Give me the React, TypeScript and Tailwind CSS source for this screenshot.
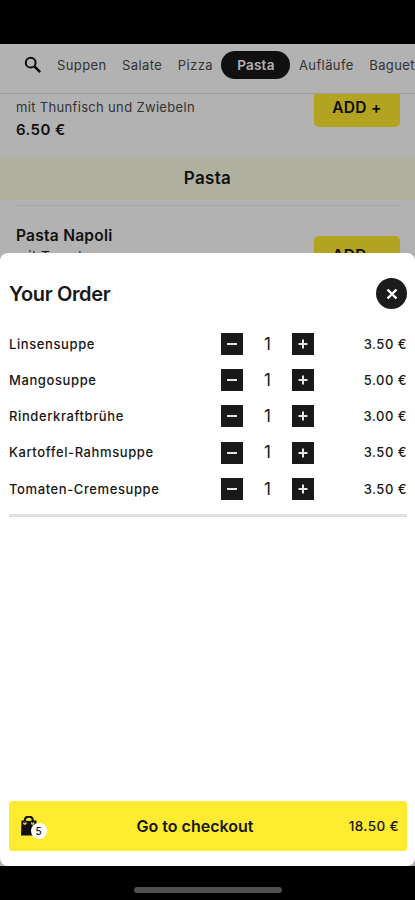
import React, { useState } from 'react';

type OrderItem = {
  name: string;
  price: number;
  amount: number;
};

const categories = ['Suppen', 'Salate', 'Pizza', 'Pasta', 'Aufläufe', 'Baguettes'];

const initialOrder: OrderItem[] = [
  { name: 'Linsensuppe', price: 3.5, amount: 1 },
  { name: 'Mangosuppe', price: 5, amount: 1 },
  { name: 'Rinderkraftbrühe', price: 3, amount: 1 },
  { name: 'Kartoffel-Rahmsuppe', price: 3.5, amount: 1 },
  { name: 'Tomaten-Cremesuppe', price: 3.5, amount: 1 },
];

const AddButton: React.FC = () => (
  <button className="h-[39px] w-[86px] shrink-0 rounded-[5px] bg-[#ffeb2f] pt-px text-[15.5px] font-semibold tracking-[0.3px] text-[#111]">
    ADD +
  </button>
);

const CategoryBar: React.FC = () => (
  <nav className="flex h-[50px] shrink-0 items-center overflow-hidden border-b border-[#e2e2e2] pb-[7px] pl-6 text-[13px] whitespace-nowrap text-[#4b4b4b]">
    <svg viewBox="0 0 18 18" className="mr-[15px] h-[18px] w-[18px] shrink-0" fill="none" stroke="#111">
      <circle cx="6.7" cy="6.7" r="4.9" strokeWidth="2" />
      <path d="M10.4 10.4 L16.2 16.2" strokeWidth="2.5" />
    </svg>
    <div className="flex items-center gap-[15.5px]">
      {categories.map((category) =>
        category === 'Pasta' ? (
          <span
            key={category}
            className="-mx-[7px] flex h-7 w-[69px] shrink-0 items-center justify-center rounded-full bg-[#181818] text-[13.5px] font-semibold tracking-[0.2px] text-white"
          >
            {category}
          </span>
        ) : (
          <span key={category} className="pt-px tracking-[0.4px]">
            {category}
          </span>
        )
      )}
    </div>
  </nav>
);

const Menu: React.FC = () => (
  <div className="flex h-full flex-col bg-white text-[#171717]">
    <CategoryBar />
    <div className="flex h-[62px] shrink-0 items-start justify-between overflow-hidden pr-[15px] pl-4">
      <div className="pt-[3px]">
        <p className="text-[13px] leading-5 tracking-[0.33px] text-[#4b4b4b]">mit Thunfisch und Zwiebeln</p>
        <p className="mt-[3px] text-[15px] leading-5 font-semibold tracking-[0.4px]">6.50 €</p>
      </div>
      <div className="-mt-[6px]">
        <AddButton />
      </div>
    </div>
    <h2 className="flex h-11 shrink-0 items-center justify-center bg-[#fcfde6] pt-px text-[17px] font-semibold tracking-[0.3px]">
      Pasta
    </h2>
    <div className="mt-[5px] mr-[15px] ml-4 flex items-start justify-between border-t border-[#eeeff0]">
      <div className="pt-[20px]">
        <p className="text-[15.5px] leading-5 font-semibold tracking-[0.25px]">Pasta Napoli</p>
        <p className="text-[13.5px] leading-5 tracking-[0.45px]">mit Tomatensauce</p>
      </div>
      <div className="pt-[30px]">
        <AddButton />
      </div>
    </div>
  </div>
);

const App: React.FC = () => {
  const [order, setOrder] = useState<OrderItem[]>(initialOrder);
  const [open, setOpen] = useState<boolean>(true);

  const changeAmount = (index: number, step: number) => {
    setOrder(
      order.map((item, i) =>
        i === index ? { ...item, amount: Math.max(0, item.amount + step) } : item
      )
    );
  };

  const total = order.reduce((sum, item) => sum + item.price * item.amount, 0);
  const count = order.reduce((sum, item) => sum + item.amount, 0);

  return (
    <div className="flex h-[900px] w-[415px] flex-col overflow-hidden bg-black pt-11 font-['Inter','Liberation_Sans',sans-serif]">
      <main className="relative h-[822px] shrink-0 overflow-hidden">
        <Menu />
        {open && (
          <div className="absolute inset-0 bg-black/30 pt-[209px]">
            <section className="flex h-[613px] flex-col rounded-[8px] bg-white pr-2 pb-[15px] pl-[9px] text-[#171717]">
              <div className="flex h-[81px] shrink-0 items-center justify-between">
                <h1 className="text-[20px] font-semibold tracking-[-0.35px]">Your Order</h1>
                <button
                  aria-label="Close"
                  onClick={() => setOpen(false)}
                  className="flex h-[31px] w-[31px] items-center justify-center rounded-full bg-[#1c1c1c]"
                >
                  <svg viewBox="0 0 12 12" className="h-3 w-3" stroke="#fff" strokeWidth="2.4">
                    <path d="M1.5 1.5 L10.5 10.5 M10.5 1.5 L1.5 10.5" />
                  </svg>
                </button>
              </div>
              <ul className="-mt-[8px] shrink-0 border-b-[3px] border-[#dfe1e2] pb-[7px]">
                {order.map((item, index) => (
                  <li key={item.name} className="flex h-[36.2px] items-center text-[13px]">
                    <span className="w-[212px] pt-px font-medium tracking-[0.6px] whitespace-nowrap">{item.name}</span>
                    <div className="flex w-[93px] items-center justify-between">
                      <button
                        aria-label="Remove one"
                        onClick={() => changeAmount(index, -1)}
                        className="flex h-[22px] w-[22px] items-center justify-center bg-[#191919]"
                      >
                        <span className="h-[2px] w-[10px] bg-[#e4e4e4]" />
                      </button>
                      <span className="pt-px text-[17px]">{item.amount}</span>
                      <button
                        aria-label="Add one"
                        onClick={() => changeAmount(index, 1)}
                        className="flex h-[22px] w-[22px] items-center justify-center bg-[#191919]"
                      >
                        <svg viewBox="0 0 10 10" className="h-[10px] w-[10px]" stroke="#e4e4e4" strokeWidth="2">
                          <path d="M5 0.5 V9.5 M0.5 5 H9.5" />
                        </svg>
                      </button>
                    </div>
                    <span className="ml-auto pt-px font-medium tracking-[0.5px]">{item.price.toFixed(2)} €</span>
                  </li>
                ))}
              </ul>
              <button className="mt-auto flex h-[50px] shrink-0 items-center rounded-[3px] bg-[#ffeb2f] pr-2 pl-3">
                <span className="relative h-5 w-[45px]">
                  <svg viewBox="0 0 16 20" className="h-5 w-4">
                    <path d="M0.5 4.5 H15.5 V19.5 H0 Z" fill="#111" />
                    <path d="M3.8 7 V4.2 A4 3.6 0 0 1 11.8 4.2 V7" fill="none" stroke="#111" strokeWidth="2.2" />
                    <path d="M5.5 4.8 A2.3 2.5 0 0 1 10.1 4.8 Z" fill="#ffeb2f" />
                    <circle cx="3.9" cy="7.2" r="1.6" fill="#ffeb2f" />
                    <circle cx="11.7" cy="7.2" r="1.6" fill="#ffeb2f" />
                    <path d="M3.9 4 V7.2 M11.7 4 V7.2" stroke="#111" strokeWidth="1.2" />
                  </svg>
                  <span className="absolute top-[7px] left-[9.5px] flex h-4 w-4 items-center justify-center rounded-full bg-white text-[10px] font-medium">
                    {count}
                  </span>
                </span>
                <span className="flex-1 text-center text-[16px] font-semibold">Go to checkout</span>
                <span className="w-[75px] text-right text-[13.5px] font-medium tracking-[0.4px]">{total.toFixed(2)} €</span>
              </button>
            </section>
          </div>
        )}
      </main>
      <footer className="flex h-[34px] shrink-0 justify-center pt-[21px]">
        <span className="h-[6px] w-[148px] rounded-full bg-[#505050]" />
      </footer>
    </div>
  );
};

export default App;
